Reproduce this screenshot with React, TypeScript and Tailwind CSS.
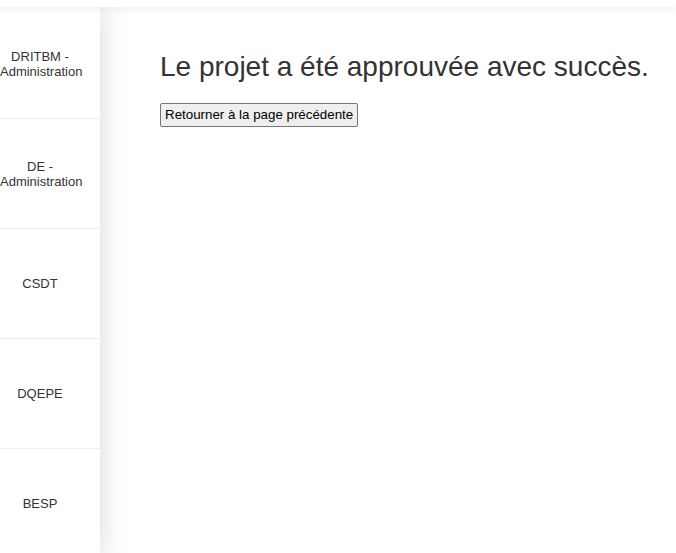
const services = ["DRITBM - Administration", "DE - Administration", "CSDT", "DQEPE", "BESP"]

export default function App() {
  return (
    <div className="min-h-[553px] bg-white font-['Liberation_Sans',Arial,sans-serif] text-[#333]">
      {/* barre du haut */}
      <div className="relative z-20 h-[7px] bg-white shadow-[0_2px_8px_rgba(0,0,0,0.08)]" />

      <div className="flex">
        {/* menu latéral */}
        <div className="relative z-10 w-[100px] shrink-0 bg-white pt-[2px] shadow-[4px_0_24px_rgba(0,0,0,0.12)]">
          {services.map((s) => (
            <div
              key={s}
              className="flex h-[110px] items-center border-b border-[#eeeeee] pr-[20px]"
            >
              <div className="w-[80px] text-center text-[13px] leading-[15px]">{s}</div>
            </div>
          ))}
        </div>

        {/* contenu */}
        <div className="flex-1 pl-[60px] pt-[44px]">
          <h2 className="text-[28px] leading-[32px]">Le projet a été approuvée avec succès.</h2>
          <button className="mt-[20px] rounded-[2px] border border-[#767676] bg-[#efefef] px-[4px] py-[3px] font-['Liberation_Sans',Arial,sans-serif] text-[13.33px] leading-[16px] text-black">
            Retourner à la page précédente
          </button>
        </div>
      </div>
    </div>
  )
}
